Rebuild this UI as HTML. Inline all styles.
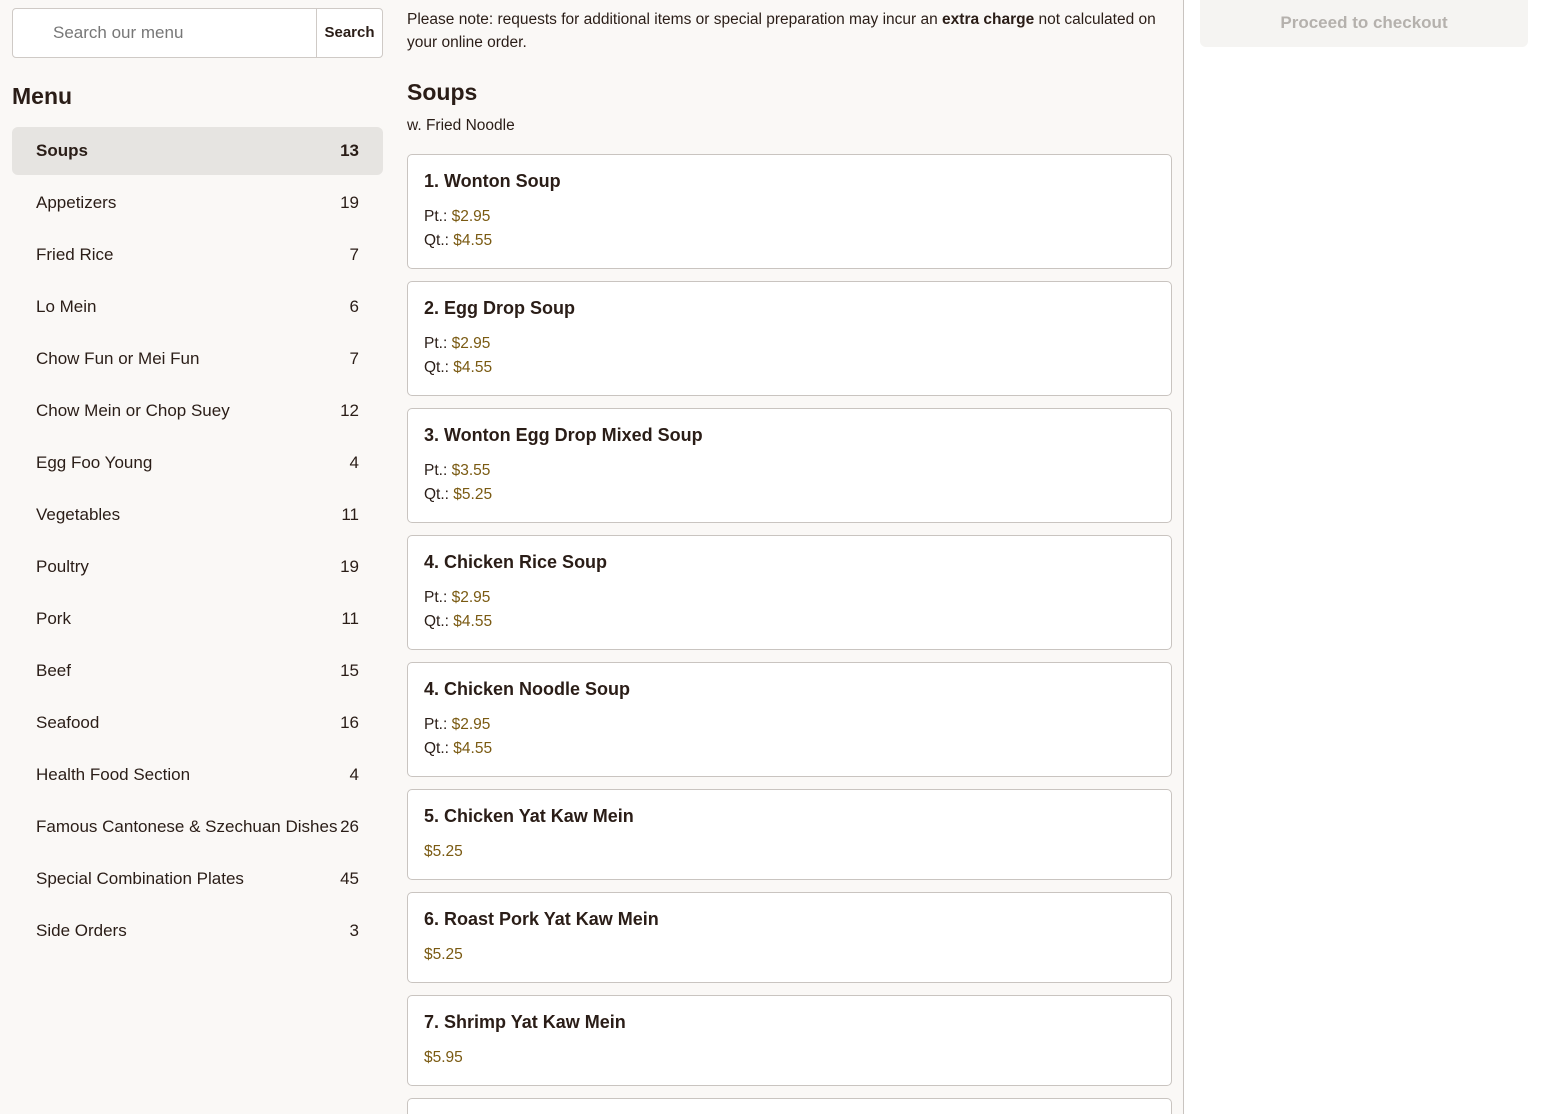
<!DOCTYPE html>
<html style="overflow:hidden;height:1114px"><head><style>
*{box-sizing:border-box;margin:0;padding:0}
body{width:1544px;height:1114px;overflow:hidden;background:#faf8f6;font-family:"Liberation Sans",sans-serif;color:#2a1d17;position:relative}
.search{position:absolute;left:12px;top:8px;width:371px;height:50px;border:1px solid #cfcac6;border-radius:4px;background:#fff}
.search .ph{position:absolute;left:40px;top:14px;font-size:17px;color:#777}
.search .btn{position:absolute;right:0;top:0;width:66px;height:48px;border-left:1px solid #cfcac6;font-size:15px;font-weight:bold;text-align:center;line-height:48px}
h2.menu{position:absolute;left:12px;top:83px;font-size:23px;font-weight:bold}
.cat{position:absolute;left:12px;width:371px;height:48px;font-size:17px;line-height:48px;padding:0 24px}
.cat span{float:right}
.cat.act{background:#e6e4e1;border-radius:6px;font-weight:bold}
.note{position:absolute;left:407px;top:8px;width:755px;font-size:15.5px;line-height:23px}
h2.sec{position:absolute;left:407px;top:79px;font-size:23px;font-weight:bold}
.sub{position:absolute;left:407px;top:117px;font-size:15.5px}
.card{position:absolute;left:407px;width:765px;border:1px solid #c9c4c0;border-radius:5px;background:#fff;padding:16px 16px}
.card h3{font-size:18px;font-weight:bold;margin-bottom:13px}
.card p{font-size:15.5px;line-height:24px}
.card b{font-weight:normal;color:#7a5a12}
.vl{position:absolute;left:1183px;top:0;width:1px;height:1114px;background:#c9c4c0}
.rp{position:absolute;left:1184px;top:0;width:360px;height:1114px;background:#fff}
.co{position:absolute;left:1200px;top:0;width:328px;height:47px;background:#f5f4f2;border-radius:0 0 6px 6px;text-align:center;line-height:46px;font-size:17px;font-weight:bold;color:#b5b1ad}
</style></head><body>
<div class="search"><div class="ph">Search our menu</div><div class="btn">Search</div></div>
<h2 class="menu">Menu</h2>
<div class="cat act" style="top:127px">Soups<span>13</span></div>
<div class="cat" style="top:179px">Appetizers<span>19</span></div>
<div class="cat" style="top:231px">Fried Rice<span>7</span></div>
<div class="cat" style="top:283px">Lo Mein<span>6</span></div>
<div class="cat" style="top:335px">Chow Fun or Mei Fun<span>7</span></div>
<div class="cat" style="top:387px">Chow Mein or Chop Suey<span>12</span></div>
<div class="cat" style="top:439px">Egg Foo Young<span>4</span></div>
<div class="cat" style="top:491px">Vegetables<span>11</span></div>
<div class="cat" style="top:543px">Poultry<span>19</span></div>
<div class="cat" style="top:595px">Pork<span>11</span></div>
<div class="cat" style="top:647px">Beef<span>15</span></div>
<div class="cat" style="top:699px">Seafood<span>16</span></div>
<div class="cat" style="top:751px">Health Food Section<span>4</span></div>
<div class="cat" style="top:803px">Famous Cantonese &amp; Szechuan Dishes<span>26</span></div>
<div class="cat" style="top:855px">Special Combination Plates<span>45</span></div>
<div class="cat" style="top:907px">Side Orders<span>3</span></div>

<div class="note">Please note: requests for additional items or special preparation may incur an <strong>extra charge</strong> not calculated on your online order.</div>
<h2 class="sec">Soups</h2>
<div class="sub">w. Fried Noodle</div>

<div class="card" style="top:154px;height:115px"><h3>1. Wonton Soup</h3><p>Pt.: <b>$2.95</b></p><p>Qt.: <b>$4.55</b></p></div>
<div class="card" style="top:281px;height:115px"><h3>2. Egg Drop Soup</h3><p>Pt.: <b>$2.95</b></p><p>Qt.: <b>$4.55</b></p></div>
<div class="card" style="top:408px;height:115px"><h3>3. Wonton Egg Drop Mixed Soup</h3><p>Pt.: <b>$3.55</b></p><p>Qt.: <b>$5.25</b></p></div>
<div class="card" style="top:535px;height:115px"><h3>4. Chicken Rice Soup</h3><p>Pt.: <b>$2.95</b></p><p>Qt.: <b>$4.55</b></p></div>
<div class="card" style="top:662px;height:115px"><h3>4. Chicken Noodle Soup</h3><p>Pt.: <b>$2.95</b></p><p>Qt.: <b>$4.55</b></p></div>
<div class="card" style="top:789px;height:91px"><h3>5. Chicken Yat Kaw Mein</h3><p><b>$5.25</b></p></div>
<div class="card" style="top:892px;height:91px"><h3>6. Roast Pork Yat Kaw Mein</h3><p><b>$5.25</b></p></div>
<div class="card" style="top:995px;height:91px"><h3>7. Shrimp Yat Kaw Mein</h3><p><b>$5.95</b></p></div>
<div class="card" style="top:1098px;height:16px;border-bottom:none;border-radius:5px 5px 0 0"></div>

<div class="rp"></div>
<div class="vl"></div>
<div class="co">Proceed to checkout</div>
</body></html>
